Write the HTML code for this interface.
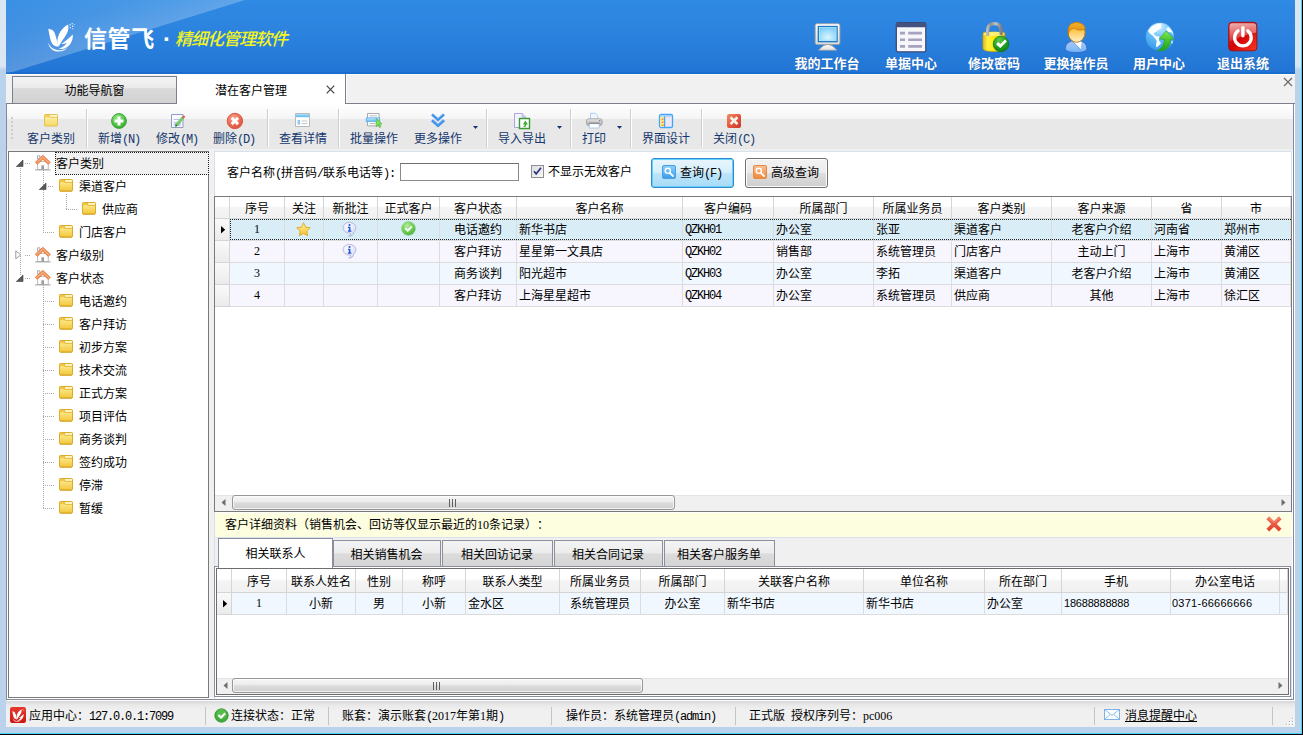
<!DOCTYPE html><html lang="zh-CN"><head><meta charset="utf-8"><title>信管飞 - 潜在客户管理</title><style>
html,body{margin:0;padding:0}
body{width:1303px;height:735px;overflow:hidden;position:relative;background:#bad2ec;
 font:12px/14px "Liberation Sans","Noto Sans CJK SC",sans-serif;color:#000;text-spacing-trim:space-all}
div,svg{position:absolute;box-sizing:border-box}
svg{overflow:visible}
.t{white-space:nowrap;line-height:14px;height:14px}
.n{font-size:11px}
.tb{color:#15376d}
.hd{color:#fff;font-weight:bold;font-size:13px;line-height:15px;white-space:nowrap;text-align:center;
 font-family:"Liberation Sans","Noto Sans CJK SC",sans-serif;text-shadow:0 0 1px rgba(20,60,130,.6)}
.m,.p{font-family:"Liberation Mono",monospace;font-size:12px;letter-spacing:-1.2px}
.s{font-family:"Liberation Serif",serif;font-size:12px}
</style></head><body>
<div style="left:0px;top:0px;width:1303px;height:70px;background:linear-gradient(#dbe6f3 0,#dbe6f3 66px,#bad2ec 70px)"></div>
<div style="left:1301px;top:0px;width:1px;height:734px;background:#45d0f8"></div>
<div style="left:0px;top:733px;width:1302px;height:1px;background:#45d0f8"></div>
<div style="left:1302px;top:0px;width:1px;height:735px;background:#000"></div>
<div style="left:0px;top:734px;width:1303px;height:1px;background:#000"></div>
<div style="left:6px;top:0px;width:1289px;height:74px;background:linear-gradient(#2f8ae3,#2b82de 50%,#2174d3);overflow:hidden"><svg style="left:0;top:0" width="1289" height="74" viewBox="6 0 1289 74"><defs><linearGradient id="hl" gradientUnits="userSpaceOnUse" x1="6" y1="0" x2="26.900" y2="67.600"><stop offset="0" stop-color="#fff" stop-opacity=".05"/><stop offset=".55" stop-color="#fff" stop-opacity=".12"/><stop offset="1" stop-color="#fff" stop-opacity=".24"/></linearGradient></defs><polygon points="6,0 245,0 6,74" fill="url(#hl)"/><rect x="6" y="72" width="1289" height="2" fill="#1768cc" opacity=".6"/></svg></div>
<svg style="left:46px;top:22px;" width="30" height="30" viewBox="0 0 30 30"><path d="M2.300 6.700C5 7 7.500 8.200 8.400 10.200c1.500 3.400 2.400 8.800 4.200 14.400-3-.2-5.400-1.200-6.600-3.200C4 18 3.400 12.500 2.300 6.700z" fill="#fff"/><path d="M12.600 24.600c-1.800-3.400-1.700-8 .4-12.400C15 8 18.300 4.600 22 2.600c.9 2.600.4 6.200-1.400 9.400-1.900 3.400-5 7.400-8 12.600z" fill="#fff"/><path d="M26.800 12.400C27.200 18 24.500 23.500 19.500 26 17 27.200 14.500 27.400 12.600 26.600 16.500 25.600 19.500 23.400 21 20.400 19.200 21.400 17.400 22 15.400 22 19 19.600 22.800 16 26.800 12.400z" fill="#fff"/><path d="M2.200 20.400c1.200 3.600 4.200 6.400 8.200 7.400 4.200 1 8.400 0 11.800-2.800-3 3.600-7.400 5.200-11.800 4.400-4.400-.8-7.600-4-8.200-9z" fill="#fff" opacity=".92"/><rect x="23.400" y="2.200" width="1.300" height="1.300" fill="#fff" opacity=".9"/><rect x="25.600" y="1" width="1.200" height="1.200" fill="#fff" opacity=".85"/><rect x="26" y="3.600" width="1.300" height="1.300" fill="#fff" opacity=".85"/><rect x="23.800" y="5" width="1.200" height="1.200" fill="#fff" opacity=".8"/><rect x="26.200" y="6.200" width="1.100" height="1.100" fill="#fff" opacity=".75"/><rect x="27.800" y="2.200" width="1" height="1" fill="#fff" opacity=".7"/></svg>
<div style="left:84px;top:24px;width:72px;height:30px;white-space:nowrap;color:#fff;font:bold 23px/30px 'Liberation Sans','Noto Sans CJK SC',sans-serif;letter-spacing:.6px">信管飞</div>
<div style="left:160px;top:24px;width:14px;height:30px;color:#fff;font:bold 24px/30px 'Liberation Sans','Noto Sans CJK SC',sans-serif;text-align:center">·</div>
<div style="left:175px;top:25px;height:30px;white-space:nowrap;color:#f4f41e;letter-spacing:-1px;font:italic 500 17px/30px 'Liberation Sans','Noto Sans CJK SC',sans-serif">精细化管理软件</div>
<svg style="left:811px;top:21px;" width="32" height="32" viewBox="0 0 32 32"><defs><linearGradient id="mo1" x1="0" y1="0" x2="0" y2="1"><stop offset="0" stop-color="#ffffff"/><stop offset="1" stop-color="#dcdcdc"/></linearGradient><radialGradient id="mo2" cx=".5" cy=".7" r=".75"><stop offset="0" stop-color="#d8f6ff"/><stop offset="1" stop-color="#6ec6f8"/></radialGradient></defs><path d="M7.500 29.300Q16.700 17.500 25.900 29.300z" fill="url(#mo1)" stroke="#9a9a9a" stroke-width=".7"/><rect x="4.200" y="2.700" width="24.700" height="20.800" rx="1.800" fill="url(#mo1)" stroke="#a2a2a2" stroke-width=".9"/><rect x="7.300" y="5.500" width="18.800" height="15.200" fill="url(#mo2)" stroke="#1f78c0" stroke-width="1.300"/><rect x="8.400" y="6.600" width="16.600" height="13" fill="none" stroke="#b4e4fc" stroke-width=".7"/></svg>
<div class="hd" style="left:787px;top:56px;width:80px;height:15px">我的工作台</div>
<svg style="left:895px;top:21px;" width="32" height="32" viewBox="0 0 32 32"><rect x="1.300" y="1.600" width="29.500" height="29.200" rx="1.600" fill="#f6f6fb" stroke="#3d4a78" stroke-width="1.300"/><path d="M1.700 3.200q0-1.200 1.200-1.200h26.300q1.200 0 1.200 1.200v3H1.700z" fill="#46527e"/><path d="M5 10.700h5v2.700H5zM13.200 10.700h13.800v2.700H13.200zM5 17.400h5v2.700H5zM13.200 17.400h13.800v2.700H13.200zM5 24.100h5v2.700H5zM13.200 24.100h13.800v2.700H13.200z" fill="#a5a3bf"/></svg>
<div class="hd" style="left:871px;top:56px;width:80px;height:15px">单据中心</div>
<svg style="left:978px;top:21px;" width="32" height="32" viewBox="0 0 32 32"><defs><linearGradient id="lk1" x1="0" y1="0" x2="1" y2="0"><stop offset="0" stop-color="#e8bc08"/><stop offset=".22" stop-color="#fff24a"/><stop offset=".45" stop-color="#ffea10"/><stop offset="1" stop-color="#e6b208"/></linearGradient><linearGradient id="lk2" x1="0" y1="0" x2="1" y2="0"><stop offset="0" stop-color="#b9b9b9"/><stop offset=".25" stop-color="#8c8c8c"/><stop offset=".6" stop-color="#c4c4c4"/><stop offset="1" stop-color="#7e7e7e"/></linearGradient><radialGradient id="lk3" cx=".4" cy=".25" r=".85"><stop offset="0" stop-color="#5ccc44"/><stop offset=".6" stop-color="#1f9a1e"/><stop offset="1" stop-color="#0c7a14"/></radialGradient></defs><path d="M5 12.800q0-1.600 1.600-1.600h18.600q1.600 0 1.600 1.600v14.400q0 3.200-10.900 3.200T5 27.200z" fill="url(#lk1)" stroke="#d6a406" stroke-width=".7"/><ellipse cx="15.900" cy="12.900" rx="10.600" ry="2.100" fill="#fff37a" opacity=".9"/><path d="M9.600 15V9.400q0-6.800 6.700-6.800t6.800 6.800V14" fill="none" stroke="url(#lk2)" stroke-width="3.200"/><circle cx="23" cy="23" r="7.800" fill="url(#lk3)" stroke="#0d7414" stroke-width=".7"/><path d="M18.100 23.400l2-2.300 2.300 1.900 4.700-4.400 1.700 1.900-6.500 6.500z" fill="#fff"/></svg>
<div class="hd" style="left:954px;top:56px;width:80px;height:15px">修改密码</div>
<svg style="left:1060px;top:21px;" width="32" height="32" viewBox="0 0 32 32"><defs><linearGradient id="us1" x1="0" y1="0" x2="0" y2="1"><stop offset="0" stop-color="#ffb020"/><stop offset=".35" stop-color="#ffc040"/><stop offset="1" stop-color="#fff4cc"/></linearGradient><linearGradient id="us2" x1="0" y1="0" x2="0" y2="1"><stop offset="0" stop-color="#a9c6f4"/><stop offset=".6" stop-color="#8cc0f8"/><stop offset="1" stop-color="#6fb2f4"/></linearGradient><linearGradient id="us3" x1="0" y1="0" x2="0" y2="1"><stop offset="0" stop-color="#f4b030"/><stop offset="1" stop-color="#dc8c04"/></linearGradient></defs><path d="M5.300 27.500q0-7.500 10.800-8.200 10.800.7 10.800 8.200 0 4-10.800 4T5.300 27.500z" fill="url(#us2)" stroke="#3a62c8" stroke-width=".8"/><path d="M12.600 20.500h9l-.9 7.900z" fill="#fff"/><path d="M12.600 20.500l8.100 7.900" stroke="#4a7ad0" stroke-width=".7"/><ellipse cx="16.600" cy="11.300" rx="8.500" ry="10" fill="url(#us1)" stroke="#c07408" stroke-width=".9"/><path d="M8.100 13.200Q7.300 5 11.500 2.600 16.500 .2 21.600 2.600 25.700 5 25.100 8q-3 1.800-7.600.8-3.400-2.600-6.400-.6-2 2.200-3 5z" fill="url(#us3)" stroke="#c07408" stroke-width=".6"/></svg>
<div class="hd" style="left:1036px;top:56px;width:80px;height:15px">更换操作员</div>
<svg style="left:1144px;top:21px;" width="32" height="32" viewBox="0 0 32 32"><defs><radialGradient id="gl1" cx=".5" cy=".15" r=".95"><stop offset="0" stop-color="#c8eeff"/><stop offset=".45" stop-color="#62bcf6"/><stop offset="1" stop-color="#2b8fe4"/></radialGradient><linearGradient id="gl2" x1="0" y1="0" x2="0" y2="1"><stop offset="0" stop-color="#86ea52"/><stop offset=".5" stop-color="#44c22c"/><stop offset="1" stop-color="#1f9c18"/></linearGradient></defs><circle cx="15.900" cy="15.900" r="14.100" fill="url(#gl1)"/><path d="M4 9.800L7.300 5.400 13.800 2.400l3.900.3-.6 4.400-4.300 3.200-3.300 2.200 2.200 2.200 3.800 1.100-.6 3.800 2.200 2.700-4.300 4.300-.9-2.100.9-4.400-1.700-2.700-2.200-2.700-3.200-2.200z" fill="#fff" opacity=".96"/><path d="M22 8.100l2.200-2.400 3.800 4.100 1.900 4.900-2.400-3.200-3.300-.8z" fill="#fff" opacity=".96"/><path d="M26.900 20.100l2.200.6-1.200 2.600z" fill="#fff" opacity=".85"/><path d="M22.300 10L29.900 17.900l-3.500.5q.1 8.100-5.900 10.600-3.500 1.300-7.200.8 6.200-2.800 7.300-11.400l-5.400-.5z" fill="url(#gl2)" stroke="#27a01c" stroke-width=".6" stroke-linejoin="round"/></svg>
<div class="hd" style="left:1119px;top:56px;width:80px;height:15px">用户中心</div>
<svg style="left:1227px;top:21px;" width="32" height="32" viewBox="0 0 32 32"><defs><linearGradient id="pw1" x1="0" y1="0" x2="1" y2="1"><stop offset="0" stop-color="#d83030"/><stop offset=".5" stop-color="#d40404"/><stop offset="1" stop-color="#f83a24"/></linearGradient><linearGradient id="pw2" x1="0" y1="0" x2="0" y2="1"><stop offset="0" stop-color="#fff" stop-opacity=".62"/><stop offset="1" stop-color="#fff" stop-opacity=".12"/></linearGradient></defs><rect x="1.700" y="1.300" width="28.200" height="28.500" rx="3.400" fill="url(#pw1)" stroke="#a00c0c" stroke-width=".9"/><path d="M2.600 5q0-2.800 2.800-2.800h21q2.800 0 2.800 2.800v6.500Q16 14 2.600 20.500z" fill="url(#pw2)"/><path d="M11 9.800a8.300 8.300 0 1 0 9.800 0" fill="none" stroke="#fff" stroke-width="3.300" stroke-linecap="round"/><path d="M15.900 6.600v8.200" stroke="#fff" stroke-width="3.400" stroke-linecap="round"/></svg>
<div class="hd" style="left:1203px;top:56px;width:80px;height:15px">退出系统</div>
<div style="left:6px;top:74px;width:1289px;height:30px;background:#f1f1f1;border-top:1px solid #fffdf6"></div>
<div style="left:6px;top:103px;width:1289px;height:1px;background:#7b7f8e"></div>
<div style="left:12px;top:76px;width:165px;height:28px;border:1px solid #7b7f8e;background:linear-gradient(#f3f3f3 0,#ebebeb 40%,#dadada 45%,#d2d2d2 100%)"></div>
<div class="t" style="left:12px;top:84px;width:165px;text-align:center;">功能导航窗</div>
<div style="left:177px;top:74px;width:169px;height:30px;background:#fff;border-right:1px solid #7b7f8e"></div>
<div style="left:346px;top:75px;width:1px;height:28px;background:#fbfbfb"></div>
<div class="t" style="left:215px;top:84px;">潜在客户管理</div>
<svg style="left:326px;top:85px;" width="9" height="9" viewBox="0 0 9 9"><path d="M.7.7l7.6 7.6M8.3.7L.7 8.3" stroke="#444" stroke-width="1.2" fill="none"/></svg>
<svg style="left:1283px;top:77px;" width="10" height="10" viewBox="0 0 10 10"><path d="M1 1l8 8M9 1L1 9" stroke="#6b6b6b" stroke-width="1.2" fill="none"/></svg>
<div style="left:6px;top:104px;width:1288px;height:596px;background:#f0f0f0;border-left:1px solid #868a98;border-right:1px solid #868a98;border-bottom:1px solid #868a98;box-shadow:inset 0 -1px 0 #fff,inset 1px 0 0 #fff,inset -1px 0 0 #fff"></div>
<div style="left:1294px;top:104px;width:1px;height:596px;background:#fff"></div>
<div style="left:7px;top:104px;width:1286px;height:47px;background:linear-gradient(#ffffff 0,#f5f5f5 15px,#e8e8e8 15px,#e8e8e8 45px,#f0f0f0 45px,#f0f0f0 47px)"></div>
<div style="left:11px;top:117px;width:2px;height:2px;background:#cdcdcd"></div>
<div style="left:11px;top:121px;width:2px;height:2px;background:#cdcdcd"></div>
<div style="left:11px;top:125px;width:2px;height:2px;background:#cdcdcd"></div>
<div style="left:11px;top:129px;width:2px;height:2px;background:#cdcdcd"></div>
<div style="left:11px;top:133px;width:2px;height:2px;background:#cdcdcd"></div>
<div style="left:11px;top:137px;width:2px;height:2px;background:#cdcdcd"></div>
<div class="t tb" style="left:27px;top:132px;">客户类别</div>
<svg style="left:43px;top:112px;" width="16" height="16" viewBox="0 0 16 16"><defs><linearGradient id="fo1" x1="0" y1="0" x2="0" y2="1"><stop offset="0" stop-color="#fdf3b4"/><stop offset="1" stop-color="#f6d864"/></linearGradient></defs><path d="M1.500 3.200q0-.7.7-.7h11.600q.7 0 .7.700v10.100q0 .7-.7.700H2.200q-.7 0-.7-.700z" fill="url(#fo1)" stroke="#e3c050" stroke-width="1"/><path d="M2 3h4.200l.8 2.200H2z" fill="#f3d25c"/><path d="M6.400 3.200h7.700v1.700H7z" fill="#fff8d2"/><path d="M6 3l.9 2.300h7.300" stroke="#e2bf50" stroke-width=".8" fill="none"/></svg>
<div class="t tb" style="left:98px;top:132px;">新增<span class="p">(N)</span></div>
<svg style="left:111px;top:112px;" width="16" height="16" viewBox="0 0 16 16"><defs><radialGradient id="ad1" cx=".4" cy=".3" r=".8"><stop offset="0" stop-color="#9de88c"/><stop offset=".6" stop-color="#4fc244"/><stop offset="1" stop-color="#2f9e2c"/></radialGradient></defs><circle cx="8" cy="9" r="7.4" fill="url(#ad1)" stroke="#3aa537" stroke-width="1"/><path d="M6.5 4.6h3v2.9h2.9v3H9.5v2.9h-3v-2.9H3.6v-3h2.9z" fill="#fff"/></svg>
<div class="t tb" style="left:156px;top:132px;">修改<span class="p">(M)</span></div>
<svg style="left:169px;top:112px;" width="16" height="16" viewBox="0 0 16 16"><path d="M2.500 2.500h11.500v13h-11.500z" fill="#fbfbff" stroke="#8c9cc6" stroke-width="1"/><path d="M4.500 7.500h6" stroke="#b4c0e6" stroke-width="1"/><path d="M4.600 9.600h7.400v4.200H4.600z" fill="#cdd5f2"/><path d="M6 11h4.600v2.800H6z" fill="#b9c4ec"/><path d="M6.900 12.300L13 4.900l1.700 1.400-6.100 7.400-2.200.900z" fill="#74d862" stroke="#4aa840" stroke-width=".6"/><path d="M13 4.900l1-1.200q.6-.6 1.300 0l.5.400q.6.600.100 1.200l-1.100 1.200z" fill="#ea5a4a"/><path d="M6.400 14.600l.5-2.300 1.700 1.400z" fill="#4a4a4a"/></svg>
<div class="t tb" style="left:213px;top:132px;">删除<span class="p">(D)</span></div>
<svg style="left:226px;top:112px;" width="16" height="16" viewBox="0 0 16 16"><defs><radialGradient id="de1" cx=".4" cy=".3" r=".8"><stop offset="0" stop-color="#f7a38c"/><stop offset=".6" stop-color="#e86850"/><stop offset="1" stop-color="#d24c38"/></radialGradient></defs><circle cx="8.900" cy="9" r="7.700" fill="url(#de1)" stroke="#dc5a44" stroke-width="1"/><path d="M4.700 6.900l2.100-2.100 2.100 2.100 2.100-2.100 2.100 2.100L11 9l2.100 2.100-2.100 2.100-2.100-2.100-2.100 2.100-2.100-2.100L6.800 9z" fill="#fff"/></svg>
<div class="t tb" style="left:279px;top:132px;">查看详情</div>
<svg style="left:295px;top:112px;" width="16" height="16" viewBox="0 0 16 16"><path d="M.5 1.5h14v13H.5z" fill="#fff" stroke="#b9b9b9" stroke-width="1"/><path d="M1 2h13v3.2H1z" fill="#6fc3f7"/><path d="M1 2h13v1.2H1z" fill="#a9dcfb"/><path d="M2.6 8h2.4v4.6H2.6z" fill="#8ec9f5"/><path d="M6.6 9h5.8M6.6 11.6h5.8" stroke="#c4c4c4" stroke-width="1"/></svg>
<div class="t tb" style="left:350px;top:132px;">批量操作</div>
<svg style="left:366px;top:112px;" width="16" height="16" viewBox="0 0 16 16"><path d="M1.5 1.5h11.6v12.4H1.5z" fill="#fff" stroke="#a9a9a9" stroke-width="1"/><path d="M3.4 3.8h7.8M3.4 11.6h6" stroke="#bdbdbd" stroke-width="1"/><path d="M.3 5.8h13.4v3.8H.3z" fill="#79c8f8" stroke="#4aa6ec" stroke-width=".7"/><path d="M.8 6.3h12.4v1.2H.8z" fill="#b7e2fc"/><path d="M10.2 6.4v8.2l2-1.7 1.3 2.6 1.4-.7-1.3-2.5 2.4-.3z" fill="#7ee05a" stroke="#52b53a" stroke-width=".7"/></svg>
<div class="t tb" style="left:414px;top:132px;">更多操作</div>
<svg style="left:430px;top:112px;" width="16" height="16" viewBox="0 0 16 16"><path d="M1 3.3L3 1.4l5 4.5 5-4.5 2 1.9L8 9.6z" fill="#3f92ec"/><path d="M1 9.2L3 7.3l5 4.5 5-4.5 2 1.9L8 15.5z" fill="#3f92ec"/><path d="M3 1.9l5 4.5 5-4.5" stroke="#8cc2f8" stroke-width=".8" fill="none"/><path d="M3 7.8l5 4.5 5-4.5" stroke="#8cc2f8" stroke-width=".8" fill="none"/></svg>
<div class="t tb" style="left:498px;top:132px;">导入导出</div>
<svg style="left:514px;top:112px;" width="16" height="16" viewBox="0 0 16 16"><path d="M.5 1.5h7.6l3.4 3.4v10.6H.5z" fill="#f4f4ff" stroke="#a8a6d8" stroke-width="1"/><path d="M8.1 1.5v3.4h3.4" fill="#dcdcf6" stroke="#a8a6d8" stroke-width=".8"/><path d="M5.5 6.5h10v10h-10z" fill="#fff" stroke="#3a9a35" stroke-width="1.4"/><path d="M8.4 14.8q2.2.2 2.2-2.4H8.9L11.4 8.4l2.6 4h-1.7q0 3.6-3.9 2.4z" fill="#44b03c"/></svg>
<div class="t tb" style="left:582px;top:132px;">打印</div>
<svg style="left:586px;top:112px;" width="16" height="16" viewBox="0 0 16 16"><path d="M4.5 1.3h5l2.2 2.2v4h-7.2z" fill="#eef5ff" stroke="#9fc4ee" stroke-width=".8"/><defs><linearGradient id="pr1" x1="0" y1="0" x2="0" y2="1"><stop offset="0" stop-color="#e9e9e9"/><stop offset="1" stop-color="#a9a9a9"/></linearGradient></defs><rect x=".5" y="6.8" width="15.6" height="6.6" rx="2" fill="url(#pr1)" stroke="#9a9a9a" stroke-width=".8"/><path d="M3.4 11.6h9.8v4.4H3.4z" fill="#fff" stroke="#9fc4ee" stroke-width=".8"/><path d="M3 11.2h10.6" stroke="#777" stroke-width="1"/><circle cx="13.8" cy="8.6" r=".6" fill="#555"/></svg>
<div class="t tb" style="left:642px;top:132px;">界面设计</div>
<svg style="left:658px;top:112px;" width="16" height="16" viewBox="0 0 16 16"><rect x="1.5" y="2.5" width="13" height="13" rx="1.6" fill="#ece8fb" stroke="#41a6f6" stroke-width="1.3"/><path d="M2.2 3.2h11.6v1.6H2.2z" fill="#9fd2fb"/><path d="M2.2 4.8h4.2v10H2.2z" fill="#fbe78c"/><path d="M6.6 4.4v10.8" stroke="#41a6f6" stroke-width="1.2"/><path d="M3.2 7.6l2.2-1.4v1.6zM3.2 10.6l2.2-1.4v1.6zM3.2 13.6l2.2-1.4v1.6z" fill="#f0523c"/></svg>
<div class="t tb" style="left:713px;top:132px;">关闭<span class="p">(C)</span></div>
<svg style="left:726px;top:112px;" width="16" height="16" viewBox="0 0 16 16"><defs><linearGradient id="cl1" x1="0" y1="0" x2="1" y2="1"><stop offset="0" stop-color="#f58b62"/><stop offset=".5" stop-color="#e5573d"/><stop offset="1" stop-color="#c83a2c"/></linearGradient></defs><rect x="1" y="2" width="14" height="14" rx="2" fill="url(#cl1)"/><path d="M3.6 6.2l1.9-1.9L8 6.8l2.5-2.5 1.9 1.9L9.9 8.7l2.5 2.5-1.9 1.9L8 10.6l-2.5 2.5-1.9-1.9 2.5-2.5z" fill="#f3f3ee"/></svg>
<div style="left:86px;top:109px;width:2px;height:38px;background:linear-gradient(90deg,#cfcfcf 0,#cfcfcf 50%,#fff 50%)"></div>
<div style="left:267px;top:109px;width:2px;height:38px;background:linear-gradient(90deg,#cfcfcf 0,#cfcfcf 50%,#fff 50%)"></div>
<div style="left:338px;top:109px;width:2px;height:38px;background:linear-gradient(90deg,#cfcfcf 0,#cfcfcf 50%,#fff 50%)"></div>
<div style="left:486px;top:109px;width:2px;height:38px;background:linear-gradient(90deg,#cfcfcf 0,#cfcfcf 50%,#fff 50%)"></div>
<div style="left:570px;top:109px;width:2px;height:38px;background:linear-gradient(90deg,#cfcfcf 0,#cfcfcf 50%,#fff 50%)"></div>
<div style="left:630px;top:109px;width:2px;height:38px;background:linear-gradient(90deg,#cfcfcf 0,#cfcfcf 50%,#fff 50%)"></div>
<div style="left:701px;top:109px;width:2px;height:38px;background:linear-gradient(90deg,#cfcfcf 0,#cfcfcf 50%,#fff 50%)"></div>
<svg style="left:473px;top:126px;" width="5" height="3" viewBox="0 0 5 3"><path d="M0 0h5L2.5 3z" fill="#15376d"/></svg>
<svg style="left:557px;top:126px;" width="5" height="3" viewBox="0 0 5 3"><path d="M0 0h5L2.5 3z" fill="#15376d"/></svg>
<svg style="left:617px;top:126px;" width="5" height="3" viewBox="0 0 5 3"><path d="M0 0h5L2.5 3z" fill="#15376d"/></svg>
<div style="left:8px;top:151px;width:201px;height:547px;background:#fff;border:1px solid #7a7a7a"></div>
<div style="left:20px;top:168px;width:1px;height:107px;background:repeating-linear-gradient(180deg,#a8a8a8 0,#a8a8a8 1px,transparent 1px,transparent 2px)"></div>
<div style="left:43px;top:170px;width:1px;height:63px;background:repeating-linear-gradient(180deg,#a8a8a8 0,#a8a8a8 1px,transparent 1px,transparent 2px)"></div>
<div style="left:66px;top:194px;width:1px;height:16px;background:repeating-linear-gradient(180deg,#a8a8a8 0,#a8a8a8 1px,transparent 1px,transparent 2px)"></div>
<div style="left:43px;top:285px;width:1px;height:224px;background:repeating-linear-gradient(180deg,#a8a8a8 0,#a8a8a8 1px,transparent 1px,transparent 2px)"></div>
<div style="left:55px;top:152px;width:154px;height:23px;background:#f0f0f0;border:1px dotted #222"></div>
<svg style="left:16px;top:160px;" width="8" height="7" viewBox="0 0 8 7"><path d="M7 0v6.500H.3z" fill="#595959" stroke="#404040" stroke-width=".6"/></svg>
<div style="left:25px;top:163px;width:6px;height:1px;background:repeating-linear-gradient(90deg,#a8a8a8 0,#a8a8a8 1px,transparent 1px,transparent 2px)"></div>
<svg style="left:35px;top:155px;" width="16" height="16" viewBox="0 0 16 16"><path d="M2.500 .800h2.400v3.400H2.500z" fill="#fafafa" stroke="#9a9a9a" stroke-width=".8"/><path d="M2.500 6.500h10.800v8H2.500z" fill="#fdfdfd" stroke="#b8b8b8" stroke-width=".9"/><path d="M6.400 10.300h2.600v4.200H6.400z" fill="#9c9c9c"/><path d="M0 14.900h15.600" stroke="#a2a2a2" stroke-width="1"/><path d="M.300 7.300L7.800.300l7.500 7-2 2.100-5.500-5.200-5.500 5.200z" fill="#f3935a" stroke="#de6c2c" stroke-width=".7" stroke-linejoin="round"/><path d="M1.700 7.800l6.100-5.800 6.100 5.800" stroke="#fde0c8" stroke-width="1" fill="none" stroke-dasharray=".8 .8"/></svg>
<div class="t" style="left:56px;top:157px;">客户类别</div>
<svg style="left:39px;top:183px;" width="8" height="7" viewBox="0 0 8 7"><path d="M7 0v6.500H.3z" fill="#595959" stroke="#404040" stroke-width=".6"/></svg>
<div style="left:48px;top:186px;width:6px;height:1px;background:repeating-linear-gradient(90deg,#a8a8a8 0,#a8a8a8 1px,transparent 1px,transparent 2px)"></div>
<svg style="left:58px;top:179px;" width="16" height="14" viewBox="0 0 16 14"><defs><linearGradient id="tf1" x1="0" y1="0" x2="0" y2="1"><stop offset="0" stop-color="#fdf2a6"/><stop offset=".25" stop-color="#fbe684"/><stop offset="1" stop-color="#f2c73a"/></linearGradient></defs><path d="M1.500 1.300q0-.8.800-.8h11.400q.8 0 .8.800v9.900q0 .8-.8.800H2.300q-.8 0-.8-.8z" fill="url(#tf1)" stroke="#dcab2c" stroke-width="1"/><path d="M2 1h4.400l.8 2.300H2z" fill="#f0c846"/><path d="M6.600 1.200h7.400v1.800H7.200z" fill="#fff7c4"/><path d="M6.200 1l.9 2.400h7" stroke="#deae30" stroke-width=".8" fill="none"/><path d="M2 12.300h12" stroke="#cf9e22" stroke-width=".8"/></svg>
<div class="t" style="left:79px;top:180px;">渠道客户</div>
<div style="left:66px;top:209px;width:11px;height:1px;background:repeating-linear-gradient(90deg,#a8a8a8 0,#a8a8a8 1px,transparent 1px,transparent 2px)"></div>
<svg style="left:81px;top:202px;" width="16" height="14" viewBox="0 0 16 14"><defs><linearGradient id="tf2" x1="0" y1="0" x2="0" y2="1"><stop offset="0" stop-color="#fdf2a6"/><stop offset=".25" stop-color="#fbe684"/><stop offset="1" stop-color="#f2c73a"/></linearGradient></defs><path d="M1.500 1.300q0-.8.800-.8h11.400q.8 0 .8.800v9.900q0 .8-.8.800H2.300q-.8 0-.8-.8z" fill="url(#tf2)" stroke="#dcab2c" stroke-width="1"/><path d="M2 1h4.400l.8 2.300H2z" fill="#f0c846"/><path d="M6.600 1.200h7.400v1.800H7.200z" fill="#fff7c4"/><path d="M6.200 1l.9 2.400h7" stroke="#deae30" stroke-width=".8" fill="none"/><path d="M2 12.300h12" stroke="#cf9e22" stroke-width=".8"/></svg>
<div class="t" style="left:102px;top:203px;">供应商</div>
<div style="left:43px;top:232px;width:11px;height:1px;background:repeating-linear-gradient(90deg,#a8a8a8 0,#a8a8a8 1px,transparent 1px,transparent 2px)"></div>
<svg style="left:58px;top:225px;" width="16" height="14" viewBox="0 0 16 14"><defs><linearGradient id="tf3" x1="0" y1="0" x2="0" y2="1"><stop offset="0" stop-color="#fdf2a6"/><stop offset=".25" stop-color="#fbe684"/><stop offset="1" stop-color="#f2c73a"/></linearGradient></defs><path d="M1.500 1.300q0-.8.800-.8h11.400q.8 0 .8.800v9.900q0 .8-.8.800H2.300q-.8 0-.8-.8z" fill="url(#tf3)" stroke="#dcab2c" stroke-width="1"/><path d="M2 1h4.400l.8 2.300H2z" fill="#f0c846"/><path d="M6.600 1.200h7.400v1.800H7.200z" fill="#fff7c4"/><path d="M6.200 1l.9 2.400h7" stroke="#deae30" stroke-width=".8" fill="none"/><path d="M2 12.300h12" stroke="#cf9e22" stroke-width=".8"/></svg>
<div class="t" style="left:79px;top:226px;">门店客户</div>
<svg style="left:15px;top:250px;" width="7" height="10" viewBox="0 0 7 10"><path d="M.8.800v8L5.800 4.800z" fill="#fff" stroke="#9a9a9a" stroke-width="1"/></svg>
<div style="left:25px;top:255px;width:6px;height:1px;background:repeating-linear-gradient(90deg,#a8a8a8 0,#a8a8a8 1px,transparent 1px,transparent 2px)"></div>
<svg style="left:35px;top:247px;" width="16" height="16" viewBox="0 0 16 16"><path d="M2.500 .800h2.400v3.400H2.500z" fill="#fafafa" stroke="#9a9a9a" stroke-width=".8"/><path d="M2.500 6.500h10.800v8H2.500z" fill="#fdfdfd" stroke="#b8b8b8" stroke-width=".9"/><path d="M6.400 10.300h2.600v4.200H6.400z" fill="#9c9c9c"/><path d="M0 14.900h15.600" stroke="#a2a2a2" stroke-width="1"/><path d="M.300 7.300L7.800.300l7.500 7-2 2.100-5.500-5.200-5.500 5.200z" fill="#f3935a" stroke="#de6c2c" stroke-width=".7" stroke-linejoin="round"/><path d="M1.700 7.800l6.100-5.800 6.100 5.800" stroke="#fde0c8" stroke-width="1" fill="none" stroke-dasharray=".8 .8"/></svg>
<div class="t" style="left:56px;top:249px;">客户级别</div>
<svg style="left:16px;top:275px;" width="8" height="7" viewBox="0 0 8 7"><path d="M7 0v6.500H.3z" fill="#595959" stroke="#404040" stroke-width=".6"/></svg>
<div style="left:25px;top:278px;width:6px;height:1px;background:repeating-linear-gradient(90deg,#a8a8a8 0,#a8a8a8 1px,transparent 1px,transparent 2px)"></div>
<svg style="left:35px;top:270px;" width="16" height="16" viewBox="0 0 16 16"><path d="M2.500 .800h2.400v3.400H2.500z" fill="#fafafa" stroke="#9a9a9a" stroke-width=".8"/><path d="M2.500 6.500h10.800v8H2.500z" fill="#fdfdfd" stroke="#b8b8b8" stroke-width=".9"/><path d="M6.400 10.300h2.600v4.200H6.400z" fill="#9c9c9c"/><path d="M0 14.900h15.600" stroke="#a2a2a2" stroke-width="1"/><path d="M.300 7.300L7.800.300l7.500 7-2 2.100-5.500-5.200-5.500 5.200z" fill="#f3935a" stroke="#de6c2c" stroke-width=".7" stroke-linejoin="round"/><path d="M1.700 7.800l6.100-5.800 6.100 5.800" stroke="#fde0c8" stroke-width="1" fill="none" stroke-dasharray=".8 .8"/></svg>
<div class="t" style="left:56px;top:272px;">客户状态</div>
<div style="left:43px;top:301px;width:11px;height:1px;background:repeating-linear-gradient(90deg,#a8a8a8 0,#a8a8a8 1px,transparent 1px,transparent 2px)"></div>
<svg style="left:58px;top:294px;" width="16" height="14" viewBox="0 0 16 14"><defs><linearGradient id="tf6" x1="0" y1="0" x2="0" y2="1"><stop offset="0" stop-color="#fdf2a6"/><stop offset=".25" stop-color="#fbe684"/><stop offset="1" stop-color="#f2c73a"/></linearGradient></defs><path d="M1.500 1.300q0-.8.800-.8h11.400q.8 0 .8.800v9.900q0 .8-.8.800H2.300q-.8 0-.8-.8z" fill="url(#tf6)" stroke="#dcab2c" stroke-width="1"/><path d="M2 1h4.400l.8 2.300H2z" fill="#f0c846"/><path d="M6.600 1.200h7.400v1.800H7.200z" fill="#fff7c4"/><path d="M6.200 1l.9 2.400h7" stroke="#deae30" stroke-width=".8" fill="none"/><path d="M2 12.300h12" stroke="#cf9e22" stroke-width=".8"/></svg>
<div class="t" style="left:79px;top:295px;">电话邀约</div>
<div style="left:43px;top:324px;width:11px;height:1px;background:repeating-linear-gradient(90deg,#a8a8a8 0,#a8a8a8 1px,transparent 1px,transparent 2px)"></div>
<svg style="left:58px;top:317px;" width="16" height="14" viewBox="0 0 16 14"><defs><linearGradient id="tf7" x1="0" y1="0" x2="0" y2="1"><stop offset="0" stop-color="#fdf2a6"/><stop offset=".25" stop-color="#fbe684"/><stop offset="1" stop-color="#f2c73a"/></linearGradient></defs><path d="M1.500 1.300q0-.8.800-.8h11.400q.8 0 .8.800v9.900q0 .8-.8.800H2.300q-.8 0-.8-.8z" fill="url(#tf7)" stroke="#dcab2c" stroke-width="1"/><path d="M2 1h4.400l.8 2.300H2z" fill="#f0c846"/><path d="M6.600 1.200h7.400v1.800H7.200z" fill="#fff7c4"/><path d="M6.200 1l.9 2.400h7" stroke="#deae30" stroke-width=".8" fill="none"/><path d="M2 12.300h12" stroke="#cf9e22" stroke-width=".8"/></svg>
<div class="t" style="left:79px;top:318px;">客户拜访</div>
<div style="left:43px;top:347px;width:11px;height:1px;background:repeating-linear-gradient(90deg,#a8a8a8 0,#a8a8a8 1px,transparent 1px,transparent 2px)"></div>
<svg style="left:58px;top:340px;" width="16" height="14" viewBox="0 0 16 14"><defs><linearGradient id="tf8" x1="0" y1="0" x2="0" y2="1"><stop offset="0" stop-color="#fdf2a6"/><stop offset=".25" stop-color="#fbe684"/><stop offset="1" stop-color="#f2c73a"/></linearGradient></defs><path d="M1.500 1.300q0-.8.800-.8h11.400q.8 0 .8.800v9.900q0 .8-.8.800H2.300q-.8 0-.8-.8z" fill="url(#tf8)" stroke="#dcab2c" stroke-width="1"/><path d="M2 1h4.400l.8 2.300H2z" fill="#f0c846"/><path d="M6.600 1.200h7.400v1.800H7.200z" fill="#fff7c4"/><path d="M6.200 1l.9 2.400h7" stroke="#deae30" stroke-width=".8" fill="none"/><path d="M2 12.300h12" stroke="#cf9e22" stroke-width=".8"/></svg>
<div class="t" style="left:79px;top:341px;">初步方案</div>
<div style="left:43px;top:370px;width:11px;height:1px;background:repeating-linear-gradient(90deg,#a8a8a8 0,#a8a8a8 1px,transparent 1px,transparent 2px)"></div>
<svg style="left:58px;top:363px;" width="16" height="14" viewBox="0 0 16 14"><defs><linearGradient id="tf9" x1="0" y1="0" x2="0" y2="1"><stop offset="0" stop-color="#fdf2a6"/><stop offset=".25" stop-color="#fbe684"/><stop offset="1" stop-color="#f2c73a"/></linearGradient></defs><path d="M1.500 1.300q0-.8.800-.8h11.400q.8 0 .8.800v9.900q0 .8-.8.800H2.300q-.8 0-.8-.8z" fill="url(#tf9)" stroke="#dcab2c" stroke-width="1"/><path d="M2 1h4.400l.8 2.300H2z" fill="#f0c846"/><path d="M6.600 1.200h7.400v1.800H7.200z" fill="#fff7c4"/><path d="M6.200 1l.9 2.400h7" stroke="#deae30" stroke-width=".8" fill="none"/><path d="M2 12.300h12" stroke="#cf9e22" stroke-width=".8"/></svg>
<div class="t" style="left:79px;top:364px;">技术交流</div>
<div style="left:43px;top:393px;width:11px;height:1px;background:repeating-linear-gradient(90deg,#a8a8a8 0,#a8a8a8 1px,transparent 1px,transparent 2px)"></div>
<svg style="left:58px;top:386px;" width="16" height="14" viewBox="0 0 16 14"><defs><linearGradient id="tf10" x1="0" y1="0" x2="0" y2="1"><stop offset="0" stop-color="#fdf2a6"/><stop offset=".25" stop-color="#fbe684"/><stop offset="1" stop-color="#f2c73a"/></linearGradient></defs><path d="M1.500 1.300q0-.8.800-.8h11.400q.8 0 .8.800v9.900q0 .8-.8.800H2.300q-.8 0-.8-.8z" fill="url(#tf10)" stroke="#dcab2c" stroke-width="1"/><path d="M2 1h4.400l.8 2.300H2z" fill="#f0c846"/><path d="M6.600 1.200h7.400v1.800H7.200z" fill="#fff7c4"/><path d="M6.200 1l.9 2.400h7" stroke="#deae30" stroke-width=".8" fill="none"/><path d="M2 12.300h12" stroke="#cf9e22" stroke-width=".8"/></svg>
<div class="t" style="left:79px;top:387px;">正式方案</div>
<div style="left:43px;top:416px;width:11px;height:1px;background:repeating-linear-gradient(90deg,#a8a8a8 0,#a8a8a8 1px,transparent 1px,transparent 2px)"></div>
<svg style="left:58px;top:409px;" width="16" height="14" viewBox="0 0 16 14"><defs><linearGradient id="tf11" x1="0" y1="0" x2="0" y2="1"><stop offset="0" stop-color="#fdf2a6"/><stop offset=".25" stop-color="#fbe684"/><stop offset="1" stop-color="#f2c73a"/></linearGradient></defs><path d="M1.500 1.300q0-.8.800-.8h11.400q.8 0 .8.800v9.900q0 .8-.8.800H2.300q-.8 0-.8-.8z" fill="url(#tf11)" stroke="#dcab2c" stroke-width="1"/><path d="M2 1h4.400l.8 2.300H2z" fill="#f0c846"/><path d="M6.600 1.200h7.400v1.800H7.200z" fill="#fff7c4"/><path d="M6.200 1l.9 2.400h7" stroke="#deae30" stroke-width=".8" fill="none"/><path d="M2 12.300h12" stroke="#cf9e22" stroke-width=".8"/></svg>
<div class="t" style="left:79px;top:410px;">项目评估</div>
<div style="left:43px;top:439px;width:11px;height:1px;background:repeating-linear-gradient(90deg,#a8a8a8 0,#a8a8a8 1px,transparent 1px,transparent 2px)"></div>
<svg style="left:58px;top:432px;" width="16" height="14" viewBox="0 0 16 14"><defs><linearGradient id="tf12" x1="0" y1="0" x2="0" y2="1"><stop offset="0" stop-color="#fdf2a6"/><stop offset=".25" stop-color="#fbe684"/><stop offset="1" stop-color="#f2c73a"/></linearGradient></defs><path d="M1.500 1.300q0-.8.800-.8h11.400q.8 0 .8.800v9.900q0 .8-.8.800H2.300q-.8 0-.8-.8z" fill="url(#tf12)" stroke="#dcab2c" stroke-width="1"/><path d="M2 1h4.400l.8 2.300H2z" fill="#f0c846"/><path d="M6.600 1.200h7.400v1.800H7.200z" fill="#fff7c4"/><path d="M6.200 1l.9 2.400h7" stroke="#deae30" stroke-width=".8" fill="none"/><path d="M2 12.300h12" stroke="#cf9e22" stroke-width=".8"/></svg>
<div class="t" style="left:79px;top:433px;">商务谈判</div>
<div style="left:43px;top:462px;width:11px;height:1px;background:repeating-linear-gradient(90deg,#a8a8a8 0,#a8a8a8 1px,transparent 1px,transparent 2px)"></div>
<svg style="left:58px;top:455px;" width="16" height="14" viewBox="0 0 16 14"><defs><linearGradient id="tf13" x1="0" y1="0" x2="0" y2="1"><stop offset="0" stop-color="#fdf2a6"/><stop offset=".25" stop-color="#fbe684"/><stop offset="1" stop-color="#f2c73a"/></linearGradient></defs><path d="M1.500 1.300q0-.8.800-.8h11.400q.8 0 .8.800v9.900q0 .8-.8.800H2.300q-.8 0-.8-.8z" fill="url(#tf13)" stroke="#dcab2c" stroke-width="1"/><path d="M2 1h4.400l.8 2.300H2z" fill="#f0c846"/><path d="M6.600 1.200h7.400v1.800H7.200z" fill="#fff7c4"/><path d="M6.200 1l.9 2.400h7" stroke="#deae30" stroke-width=".8" fill="none"/><path d="M2 12.300h12" stroke="#cf9e22" stroke-width=".8"/></svg>
<div class="t" style="left:79px;top:456px;">签约成功</div>
<div style="left:43px;top:485px;width:11px;height:1px;background:repeating-linear-gradient(90deg,#a8a8a8 0,#a8a8a8 1px,transparent 1px,transparent 2px)"></div>
<svg style="left:58px;top:478px;" width="16" height="14" viewBox="0 0 16 14"><defs><linearGradient id="tf14" x1="0" y1="0" x2="0" y2="1"><stop offset="0" stop-color="#fdf2a6"/><stop offset=".25" stop-color="#fbe684"/><stop offset="1" stop-color="#f2c73a"/></linearGradient></defs><path d="M1.500 1.300q0-.8.800-.8h11.400q.8 0 .8.800v9.900q0 .8-.8.800H2.300q-.8 0-.8-.8z" fill="url(#tf14)" stroke="#dcab2c" stroke-width="1"/><path d="M2 1h4.400l.8 2.300H2z" fill="#f0c846"/><path d="M6.600 1.200h7.400v1.800H7.200z" fill="#fff7c4"/><path d="M6.200 1l.9 2.400h7" stroke="#deae30" stroke-width=".8" fill="none"/><path d="M2 12.300h12" stroke="#cf9e22" stroke-width=".8"/></svg>
<div class="t" style="left:79px;top:479px;">停滞</div>
<div style="left:43px;top:508px;width:11px;height:1px;background:repeating-linear-gradient(90deg,#a8a8a8 0,#a8a8a8 1px,transparent 1px,transparent 2px)"></div>
<svg style="left:58px;top:501px;" width="16" height="14" viewBox="0 0 16 14"><defs><linearGradient id="tf15" x1="0" y1="0" x2="0" y2="1"><stop offset="0" stop-color="#fdf2a6"/><stop offset=".25" stop-color="#fbe684"/><stop offset="1" stop-color="#f2c73a"/></linearGradient></defs><path d="M1.500 1.300q0-.8.800-.8h11.400q.8 0 .8.800v9.900q0 .8-.8.800H2.300q-.8 0-.8-.8z" fill="url(#tf15)" stroke="#dcab2c" stroke-width="1"/><path d="M2 1h4.400l.8 2.300H2z" fill="#f0c846"/><path d="M6.600 1.200h7.400v1.800H7.200z" fill="#fff7c4"/><path d="M6.200 1l.9 2.400h7" stroke="#deae30" stroke-width=".8" fill="none"/><path d="M2 12.300h12" stroke="#cf9e22" stroke-width=".8"/></svg>
<div class="t" style="left:79px;top:502px;">暂缓</div>
<div style="left:214px;top:151px;width:1078px;height:548px;background:#fff;border:1px solid #d7e1ec;border-bottom:none"></div>
<div style="left:215px;top:152px;width:1076px;height:44px;background:#fff"></div>
<div class="t" style="left:227px;top:166px;">客户名称<span class="p">(</span>拼音码<span class="p">/</span>联系电话等<span class="p">):</span></div>
<div style="left:400px;top:163px;width:119px;height:18px;background:#fff;border:1px solid #8a8a8a;border-top-color:#6e6e6e"></div>
<div style="left:531px;top:165px;width:13px;height:13px;background:linear-gradient(135deg,#dcdfe4,#f6f6f6);border:1px solid #8e8f8f"><svg style="left:1px;top:1px" width="9" height="9" viewBox="0 0 9 9"><path d="M1 4.200l2.200 2.600L8 .8" stroke="#31347c" stroke-width="1.700" fill="none"/></svg></div>
<div class="t" style="left:548px;top:165px;">不显示无效客户</div>
<div style="left:651px;top:158px;width:83px;height:30px;border:1px solid #3689cf;border-radius:3px;background:linear-gradient(#e8f5fd 0,#d6eefb 48%,#bbe4fb 52%,#a9dbf6 100%);box-shadow:inset 0 0 0 1px #5cd3fa"></div>
<svg style="left:662px;top:165px;" width="14" height="14" viewBox="0 0 14 14"><defs><linearGradient id="mgb" x1="0" y1="0" x2="0" y2="1"><stop offset="0" stop-color="#8ad2fb"/><stop offset="1" stop-color="#3a9be9"/></linearGradient></defs><rect x=".5" y=".5" width="13" height="13" rx="1.5" fill="url(#mgb)" stroke="#4c9fe0" stroke-width="1"/><circle cx="5.800" cy="5.800" r="2.600" fill="none" stroke="#fff" stroke-width="1.400"/><path d="M7.800 7.800l3.200 3.200" stroke="#fff" stroke-width="1.800" stroke-linecap="round"/></svg>
<div class="t" style="left:680px;top:166px;">查询<span class="p">(F)</span></div>
<div style="left:745px;top:158px;width:83px;height:30px;border:1px solid #707070;border-radius:3px;background:linear-gradient(#f2f2f2 0,#ebebeb 48%,#dddddd 52%,#cfcfcf 100%);box-shadow:inset 0 0 0 1px #fcfcfc"></div>
<svg style="left:753px;top:165px;" width="14" height="14" viewBox="0 0 14 14"><defs><linearGradient id="mgo" x1="0" y1="0" x2="0" y2="1"><stop offset="0" stop-color="#fcc091"/><stop offset="1" stop-color="#f0873a"/></linearGradient></defs><rect x=".5" y=".5" width="13" height="13" rx="1.5" fill="url(#mgo)" stroke="#e58a45" stroke-width="1"/><circle cx="5.800" cy="5.800" r="2.600" fill="none" stroke="#fff" stroke-width="1.400"/><path d="M7.800 7.800l3.200 3.200" stroke="#fff" stroke-width="1.800" stroke-linecap="round"/></svg>
<div class="t" style="left:771px;top:166px;">高级查询</div>
<div style="left:214px;top:196px;width:1078px;height:316px;background:#fff;border:1px solid #7a7a7a"></div>
<div style="left:215px;top:197px;width:15px;height:22px;background:linear-gradient(#ffffff 0,#ffffff 42%,#f4f4f4 52%,#f1f1f1 100%);border-right:1px solid #d5d5d5;border-bottom:1px solid #d5d5d5"></div>
<div style="left:230px;top:197px;width:55px;height:22px;background:linear-gradient(#ffffff 0,#ffffff 42%,#f4f4f4 52%,#f1f1f1 100%);border-right:1px solid #d5d5d5;border-bottom:1px solid #d5d5d5"></div>
<div class="t" style="left:230px;top:202px;width:54px;text-align:center;">序号</div>
<div style="left:285px;top:197px;width:39px;height:22px;background:linear-gradient(#ffffff 0,#ffffff 42%,#f4f4f4 52%,#f1f1f1 100%);border-right:1px solid #d5d5d5;border-bottom:1px solid #d5d5d5"></div>
<div class="t" style="left:285px;top:202px;width:38px;text-align:center;">关注</div>
<div style="left:324px;top:197px;width:54px;height:22px;background:linear-gradient(#ffffff 0,#ffffff 42%,#f4f4f4 52%,#f1f1f1 100%);border-right:1px solid #d5d5d5;border-bottom:1px solid #d5d5d5"></div>
<div class="t" style="left:324px;top:202px;width:53px;text-align:center;">新批注</div>
<div style="left:378px;top:197px;width:62px;height:22px;background:linear-gradient(#ffffff 0,#ffffff 42%,#f4f4f4 52%,#f1f1f1 100%);border-right:1px solid #d5d5d5;border-bottom:1px solid #d5d5d5"></div>
<div class="t" style="left:378px;top:202px;width:61px;text-align:center;">正式客户</div>
<div style="left:440px;top:197px;width:77px;height:22px;background:linear-gradient(#ffffff 0,#ffffff 42%,#f4f4f4 52%,#f1f1f1 100%);border-right:1px solid #d5d5d5;border-bottom:1px solid #d5d5d5"></div>
<div class="t" style="left:440px;top:202px;width:76px;text-align:center;">客户状态</div>
<div style="left:517px;top:197px;width:166px;height:22px;background:linear-gradient(#ffffff 0,#ffffff 42%,#f4f4f4 52%,#f1f1f1 100%);border-right:1px solid #d5d5d5;border-bottom:1px solid #d5d5d5"></div>
<div class="t" style="left:517px;top:202px;width:165px;text-align:center;">客户名称</div>
<div style="left:683px;top:197px;width:91px;height:22px;background:linear-gradient(#ffffff 0,#ffffff 42%,#f4f4f4 52%,#f1f1f1 100%);border-right:1px solid #d5d5d5;border-bottom:1px solid #d5d5d5"></div>
<div class="t" style="left:683px;top:202px;width:90px;text-align:center;">客户编码</div>
<div style="left:774px;top:197px;width:100px;height:22px;background:linear-gradient(#ffffff 0,#ffffff 42%,#f4f4f4 52%,#f1f1f1 100%);border-right:1px solid #d5d5d5;border-bottom:1px solid #d5d5d5"></div>
<div class="t" style="left:774px;top:202px;width:99px;text-align:center;">所属部门</div>
<div style="left:874px;top:197px;width:78px;height:22px;background:linear-gradient(#ffffff 0,#ffffff 42%,#f4f4f4 52%,#f1f1f1 100%);border-right:1px solid #d5d5d5;border-bottom:1px solid #d5d5d5"></div>
<div class="t" style="left:874px;top:202px;width:77px;text-align:center;">所属业务员</div>
<div style="left:952px;top:197px;width:100px;height:22px;background:linear-gradient(#ffffff 0,#ffffff 42%,#f4f4f4 52%,#f1f1f1 100%);border-right:1px solid #d5d5d5;border-bottom:1px solid #d5d5d5"></div>
<div class="t" style="left:952px;top:202px;width:99px;text-align:center;">客户类别</div>
<div style="left:1052px;top:197px;width:100px;height:22px;background:linear-gradient(#ffffff 0,#ffffff 42%,#f4f4f4 52%,#f1f1f1 100%);border-right:1px solid #d5d5d5;border-bottom:1px solid #d5d5d5"></div>
<div class="t" style="left:1052px;top:202px;width:99px;text-align:center;">客户来源</div>
<div style="left:1152px;top:197px;width:70px;height:22px;background:linear-gradient(#ffffff 0,#ffffff 42%,#f4f4f4 52%,#f1f1f1 100%);border-right:1px solid #d5d5d5;border-bottom:1px solid #d5d5d5"></div>
<div class="t" style="left:1152px;top:202px;width:69px;text-align:center;">省</div>
<div style="left:1222px;top:197px;width:69px;height:22px;background:linear-gradient(#ffffff 0,#ffffff 42%,#f4f4f4 52%,#f1f1f1 100%);border-right:1px solid #d5d5d5;border-bottom:1px solid #d5d5d5"></div>
<div class="t" style="left:1222px;top:202px;width:68px;text-align:center;">市</div>
<div style="left:215px;top:219px;width:15px;height:22px;background:linear-gradient(#fafafa,#ebebeb);border-right:1px solid #d5d5d5;border-bottom:1px solid #d5d5d5"></div>
<div style="left:230px;top:219px;width:55px;height:22px;background:#d9edf7;border-right:1px solid #dcdcdc;border-bottom:1px solid #dcdcdc"></div>
<div class="t n" style="left:230px;top:222px;width:54px;text-align:center;font-family:'Liberation Serif',serif;font-size:12px">1</div>
<div style="left:285px;top:219px;width:39px;height:22px;background:#d9edf7;border-right:1px solid #dcdcdc;border-bottom:1px solid #dcdcdc"></div>
<svg style="left:296px;top:222px;" width="15" height="15" viewBox="0 0 16 16"><defs><linearGradient id="st1" x1="0" y1="0" x2="0" y2="1"><stop offset="0" stop-color="#fff19a"/><stop offset="1" stop-color="#f9c22e"/></linearGradient></defs><path d="M8 .8l2.2 4.7 5 .6-3.7 3.5 1 5.1L8 12.2l-4.5 2.5 1-5.1L.8 6.100l5-.6z" fill="url(#st1)" stroke="#e0a21c" stroke-width=".9" stroke-linejoin="round"/></svg>
<div style="left:324px;top:219px;width:54px;height:22px;background:#d9edf7;border-right:1px solid #dcdcdc;border-bottom:1px solid #dcdcdc"></div>
<svg style="left:342px;top:221px;" width="15" height="16" viewBox="0 0 16 16"><defs><radialGradient id="in0" cx=".4" cy=".3" r=".8"><stop offset="0" stop-color="#ffffff"/><stop offset="1" stop-color="#d0d4f2"/></radialGradient></defs><path d="M8 1C4 1 1.200 3.500 1.200 6.600c0 3.100 2.800 5.500 6.400 5.600 1.400.1 2 .9 1.200 2.300-.3.500-.9.900-1.600 1.100 3 .2 5.400-1.700 5.200-4.400 1.500-1 2.400-2.700 2.400-4.600C14.800 3.500 12 1 8 1z" fill="url(#in0)" stroke="#a4a9d2" stroke-width=".8"/><circle cx="8" cy="3.700" r="1.150" fill="#1f55d8"/><path d="M6.300 5.700h2.700v4h1v1.100h-3.700v-1.100h1v-2.900h-1z" fill="#1f55d8"/></svg>
<div style="left:378px;top:219px;width:62px;height:22px;background:#d9edf7;border-right:1px solid #dcdcdc;border-bottom:1px solid #dcdcdc"></div>
<svg style="left:401px;top:221px;" width="15" height="15" viewBox="0 0 16 16"><defs><radialGradient id="ok1" cx=".4" cy=".3" r=".8"><stop offset="0" stop-color="#b4ee98"/><stop offset=".6" stop-color="#68c850"/><stop offset="1" stop-color="#46a838"/></radialGradient></defs><circle cx="8" cy="8" r="7.300" fill="url(#ok1)" stroke="#7ccc6c" stroke-width=".8"/><path d="M3.800 8.300l1.500-1.500 1.900 1.900 3.700-3.700 1.500 1.500-5.200 5.200z" fill="#fff"/></svg>
<div style="left:440px;top:219px;width:77px;height:22px;background:#d9edf7;border-right:1px solid #dcdcdc;border-bottom:1px solid #dcdcdc"></div>
<div class="t" style="left:440px;top:223px;width:76px;text-align:center;">电话邀约</div>
<div style="left:517px;top:219px;width:166px;height:22px;background:#d9edf7;border-right:1px solid #dcdcdc;border-bottom:1px solid #dcdcdc"></div>
<div class="t" style="left:519px;top:223px;">新华书店</div>
<div style="left:683px;top:219px;width:91px;height:22px;background:#d9edf7;border-right:1px solid #dcdcdc;border-bottom:1px solid #dcdcdc"></div>
<div class="t m" style="left:685px;top:223px;">QZKH01</div>
<div style="left:774px;top:219px;width:100px;height:22px;background:#d9edf7;border-right:1px solid #dcdcdc;border-bottom:1px solid #dcdcdc"></div>
<div class="t" style="left:776px;top:223px;">办公室</div>
<div style="left:874px;top:219px;width:78px;height:22px;background:#d9edf7;border-right:1px solid #dcdcdc;border-bottom:1px solid #dcdcdc"></div>
<div class="t" style="left:876px;top:223px;">张亚</div>
<div style="left:952px;top:219px;width:100px;height:22px;background:#d9edf7;border-right:1px solid #dcdcdc;border-bottom:1px solid #dcdcdc"></div>
<div class="t" style="left:954px;top:223px;">渠道客户</div>
<div style="left:1052px;top:219px;width:100px;height:22px;background:#d9edf7;border-right:1px solid #dcdcdc;border-bottom:1px solid #dcdcdc"></div>
<div class="t" style="left:1052px;top:223px;width:99px;text-align:center;">老客户介绍</div>
<div style="left:1152px;top:219px;width:70px;height:22px;background:#d9edf7;border-right:1px solid #dcdcdc;border-bottom:1px solid #dcdcdc"></div>
<div class="t" style="left:1154px;top:223px;">河南省</div>
<div style="left:1222px;top:219px;width:69px;height:22px;background:#d9edf7;border-right:1px solid #dcdcdc;border-bottom:1px solid #dcdcdc"></div>
<div class="t" style="left:1224px;top:223px;">郑州市</div>
<div style="left:215px;top:241px;width:15px;height:22px;background:linear-gradient(#fafafa,#ebebeb);border-right:1px solid #d5d5d5;border-bottom:1px solid #d5d5d5"></div>
<div style="left:230px;top:241px;width:55px;height:22px;background:#f7f5fd;border-right:1px solid #dcdcdc;border-bottom:1px solid #dcdcdc"></div>
<div class="t n" style="left:230px;top:244px;width:54px;text-align:center;font-family:'Liberation Serif',serif;font-size:12px">2</div>
<div style="left:285px;top:241px;width:39px;height:22px;background:#f7f5fd;border-right:1px solid #dcdcdc;border-bottom:1px solid #dcdcdc"></div>
<div style="left:324px;top:241px;width:54px;height:22px;background:#f7f5fd;border-right:1px solid #dcdcdc;border-bottom:1px solid #dcdcdc"></div>
<svg style="left:342px;top:243px;" width="15" height="16" viewBox="0 0 16 16"><defs><radialGradient id="in1" cx=".4" cy=".3" r=".8"><stop offset="0" stop-color="#ffffff"/><stop offset="1" stop-color="#d0d4f2"/></radialGradient></defs><path d="M8 1C4 1 1.200 3.500 1.200 6.600c0 3.100 2.800 5.500 6.400 5.600 1.400.1 2 .9 1.200 2.300-.3.500-.9.900-1.600 1.100 3 .2 5.400-1.700 5.200-4.400 1.500-1 2.400-2.700 2.400-4.600C14.800 3.500 12 1 8 1z" fill="url(#in1)" stroke="#a4a9d2" stroke-width=".8"/><circle cx="8" cy="3.700" r="1.150" fill="#1f55d8"/><path d="M6.300 5.700h2.700v4h1v1.100h-3.700v-1.100h1v-2.900h-1z" fill="#1f55d8"/></svg>
<div style="left:378px;top:241px;width:62px;height:22px;background:#f7f5fd;border-right:1px solid #dcdcdc;border-bottom:1px solid #dcdcdc"></div>
<div style="left:440px;top:241px;width:77px;height:22px;background:#f7f5fd;border-right:1px solid #dcdcdc;border-bottom:1px solid #dcdcdc"></div>
<div class="t" style="left:440px;top:245px;width:76px;text-align:center;">客户拜访</div>
<div style="left:517px;top:241px;width:166px;height:22px;background:#f7f5fd;border-right:1px solid #dcdcdc;border-bottom:1px solid #dcdcdc"></div>
<div class="t" style="left:519px;top:245px;">星星第一文具店</div>
<div style="left:683px;top:241px;width:91px;height:22px;background:#f7f5fd;border-right:1px solid #dcdcdc;border-bottom:1px solid #dcdcdc"></div>
<div class="t m" style="left:685px;top:245px;">QZKH02</div>
<div style="left:774px;top:241px;width:100px;height:22px;background:#f7f5fd;border-right:1px solid #dcdcdc;border-bottom:1px solid #dcdcdc"></div>
<div class="t" style="left:776px;top:245px;">销售部</div>
<div style="left:874px;top:241px;width:78px;height:22px;background:#f7f5fd;border-right:1px solid #dcdcdc;border-bottom:1px solid #dcdcdc"></div>
<div class="t" style="left:876px;top:245px;">系统管理员</div>
<div style="left:952px;top:241px;width:100px;height:22px;background:#f7f5fd;border-right:1px solid #dcdcdc;border-bottom:1px solid #dcdcdc"></div>
<div class="t" style="left:954px;top:245px;">门店客户</div>
<div style="left:1052px;top:241px;width:100px;height:22px;background:#f7f5fd;border-right:1px solid #dcdcdc;border-bottom:1px solid #dcdcdc"></div>
<div class="t" style="left:1052px;top:245px;width:99px;text-align:center;">主动上门</div>
<div style="left:1152px;top:241px;width:70px;height:22px;background:#f7f5fd;border-right:1px solid #dcdcdc;border-bottom:1px solid #dcdcdc"></div>
<div class="t" style="left:1154px;top:245px;">上海市</div>
<div style="left:1222px;top:241px;width:69px;height:22px;background:#f7f5fd;border-right:1px solid #dcdcdc;border-bottom:1px solid #dcdcdc"></div>
<div class="t" style="left:1224px;top:245px;">黄浦区</div>
<div style="left:215px;top:263px;width:15px;height:22px;background:linear-gradient(#fafafa,#ebebeb);border-right:1px solid #d5d5d5;border-bottom:1px solid #d5d5d5"></div>
<div style="left:230px;top:263px;width:55px;height:22px;background:#f0f7fe;border-right:1px solid #dcdcdc;border-bottom:1px solid #dcdcdc"></div>
<div class="t n" style="left:230px;top:266px;width:54px;text-align:center;font-family:'Liberation Serif',serif;font-size:12px">3</div>
<div style="left:285px;top:263px;width:39px;height:22px;background:#f0f7fe;border-right:1px solid #dcdcdc;border-bottom:1px solid #dcdcdc"></div>
<div style="left:324px;top:263px;width:54px;height:22px;background:#f0f7fe;border-right:1px solid #dcdcdc;border-bottom:1px solid #dcdcdc"></div>
<div style="left:378px;top:263px;width:62px;height:22px;background:#f0f7fe;border-right:1px solid #dcdcdc;border-bottom:1px solid #dcdcdc"></div>
<div style="left:440px;top:263px;width:77px;height:22px;background:#f0f7fe;border-right:1px solid #dcdcdc;border-bottom:1px solid #dcdcdc"></div>
<div class="t" style="left:440px;top:267px;width:76px;text-align:center;">商务谈判</div>
<div style="left:517px;top:263px;width:166px;height:22px;background:#f0f7fe;border-right:1px solid #dcdcdc;border-bottom:1px solid #dcdcdc"></div>
<div class="t" style="left:519px;top:267px;">阳光超市</div>
<div style="left:683px;top:263px;width:91px;height:22px;background:#f0f7fe;border-right:1px solid #dcdcdc;border-bottom:1px solid #dcdcdc"></div>
<div class="t m" style="left:685px;top:267px;">QZKH03</div>
<div style="left:774px;top:263px;width:100px;height:22px;background:#f0f7fe;border-right:1px solid #dcdcdc;border-bottom:1px solid #dcdcdc"></div>
<div class="t" style="left:776px;top:267px;">办公室</div>
<div style="left:874px;top:263px;width:78px;height:22px;background:#f0f7fe;border-right:1px solid #dcdcdc;border-bottom:1px solid #dcdcdc"></div>
<div class="t" style="left:876px;top:267px;">李拓</div>
<div style="left:952px;top:263px;width:100px;height:22px;background:#f0f7fe;border-right:1px solid #dcdcdc;border-bottom:1px solid #dcdcdc"></div>
<div class="t" style="left:954px;top:267px;">渠道客户</div>
<div style="left:1052px;top:263px;width:100px;height:22px;background:#f0f7fe;border-right:1px solid #dcdcdc;border-bottom:1px solid #dcdcdc"></div>
<div class="t" style="left:1052px;top:267px;width:99px;text-align:center;">老客户介绍</div>
<div style="left:1152px;top:263px;width:70px;height:22px;background:#f0f7fe;border-right:1px solid #dcdcdc;border-bottom:1px solid #dcdcdc"></div>
<div class="t" style="left:1154px;top:267px;">上海市</div>
<div style="left:1222px;top:263px;width:69px;height:22px;background:#f0f7fe;border-right:1px solid #dcdcdc;border-bottom:1px solid #dcdcdc"></div>
<div class="t" style="left:1224px;top:267px;">黄浦区</div>
<div style="left:215px;top:285px;width:15px;height:22px;background:linear-gradient(#fafafa,#ebebeb);border-right:1px solid #d5d5d5;border-bottom:1px solid #d5d5d5"></div>
<div style="left:230px;top:285px;width:55px;height:22px;background:#f7f5fd;border-right:1px solid #dcdcdc;border-bottom:1px solid #dcdcdc"></div>
<div class="t n" style="left:230px;top:288px;width:54px;text-align:center;font-family:'Liberation Serif',serif;font-size:12px">4</div>
<div style="left:285px;top:285px;width:39px;height:22px;background:#f7f5fd;border-right:1px solid #dcdcdc;border-bottom:1px solid #dcdcdc"></div>
<div style="left:324px;top:285px;width:54px;height:22px;background:#f7f5fd;border-right:1px solid #dcdcdc;border-bottom:1px solid #dcdcdc"></div>
<div style="left:378px;top:285px;width:62px;height:22px;background:#f7f5fd;border-right:1px solid #dcdcdc;border-bottom:1px solid #dcdcdc"></div>
<div style="left:440px;top:285px;width:77px;height:22px;background:#f7f5fd;border-right:1px solid #dcdcdc;border-bottom:1px solid #dcdcdc"></div>
<div class="t" style="left:440px;top:289px;width:76px;text-align:center;">客户拜访</div>
<div style="left:517px;top:285px;width:166px;height:22px;background:#f7f5fd;border-right:1px solid #dcdcdc;border-bottom:1px solid #dcdcdc"></div>
<div class="t" style="left:519px;top:289px;">上海星星超市</div>
<div style="left:683px;top:285px;width:91px;height:22px;background:#f7f5fd;border-right:1px solid #dcdcdc;border-bottom:1px solid #dcdcdc"></div>
<div class="t m" style="left:685px;top:289px;">QZKH04</div>
<div style="left:774px;top:285px;width:100px;height:22px;background:#f7f5fd;border-right:1px solid #dcdcdc;border-bottom:1px solid #dcdcdc"></div>
<div class="t" style="left:776px;top:289px;">办公室</div>
<div style="left:874px;top:285px;width:78px;height:22px;background:#f7f5fd;border-right:1px solid #dcdcdc;border-bottom:1px solid #dcdcdc"></div>
<div class="t" style="left:876px;top:289px;">系统管理员</div>
<div style="left:952px;top:285px;width:100px;height:22px;background:#f7f5fd;border-right:1px solid #dcdcdc;border-bottom:1px solid #dcdcdc"></div>
<div class="t" style="left:954px;top:289px;">供应商</div>
<div style="left:1052px;top:285px;width:100px;height:22px;background:#f7f5fd;border-right:1px solid #dcdcdc;border-bottom:1px solid #dcdcdc"></div>
<div class="t" style="left:1052px;top:289px;width:99px;text-align:center;">其他</div>
<div style="left:1152px;top:285px;width:70px;height:22px;background:#f7f5fd;border-right:1px solid #dcdcdc;border-bottom:1px solid #dcdcdc"></div>
<div class="t" style="left:1154px;top:289px;">上海市</div>
<div style="left:1222px;top:285px;width:69px;height:22px;background:#f7f5fd;border-right:1px solid #dcdcdc;border-bottom:1px solid #dcdcdc"></div>
<div class="t" style="left:1224px;top:289px;">徐汇区</div>
<div style="left:230px;top:219px;width:1061px;height:21px;border-top:1px dotted #222;border-bottom:1px dotted #222;border-left:1px dotted #222"></div>
<svg style="left:221px;top:226px;" width="5" height="8" viewBox="0 0 5 8"><path d="M0 0l4.200 3.800L0 7.600z" fill="#000"/></svg>
<div style="left:215px;top:495px;width:1076px;height:16px;background:#f0f0f0;border-top:1px solid #e3e3e3"></div>
<div style="left:232px;top:495px;width:443px;height:15px;border:1px solid #979797;border-radius:3px;background:linear-gradient(#f6f6f6 0,#ececec 45%,#dcdcdc 52%,#d0d0d0 100%);box-shadow:inset 0 0 0 1px rgba(255,255,255,.7)"></div>
<div style="left:449px;top:499px;width:1px;height:8px;background:#5f5f5f"></div>
<div style="left:452px;top:499px;width:1px;height:8px;background:#5f5f5f"></div>
<div style="left:455px;top:499px;width:1px;height:8px;background:#5f5f5f"></div>
<svg style="left:221px;top:499px;" width="5" height="7" viewBox="0 0 5 7"><path d="M4.500 0v7L.5 3.500z" fill="#6e6e6e"/></svg>
<svg style="left:1281px;top:499px;" width="5" height="7" viewBox="0 0 5 7"><path d="M.5 0v7l4-3.500z" fill="#6e6e6e"/></svg>
<div style="left:215px;top:513px;width:1077px;height:25px;background:#fdfddf;border-bottom:1px solid #d9e2ec"></div>
<div class="t" style="left:225px;top:518px;">客户详细资料（销售机会、回访等仅显示最近的<span class="s">10</span>条记录）：</div>
<svg style="left:1266px;top:516px;" width="16" height="16" viewBox="0 0 16 16"><defs><linearGradient id="rx1" x1="0" y1="0" x2="0" y2="1"><stop offset="0" stop-color="#f8765c"/><stop offset="1" stop-color="#e33a26"/></linearGradient></defs><path d="M.800 3.200L3.200.800 8 5.600l4.800-4.800 2.400 2.400L10.400 8l4.800 4.800-2.400 2.400L8 10.400l-4.800 4.800-2.400-2.400L5.600 8z" fill="url(#rx1)" stroke="#d8402c" stroke-width=".5"/><path d="M3.200 1.800l4.800 4.800 4.800-4.800" stroke="#fba492" stroke-width=".8" fill="none"/></svg>
<div style="left:215px;top:538px;width:1077px;height:29px;background:#f0f0f0"></div>
<div style="left:333px;top:540px;width:108px;height:27px;border:1px solid #8b8e9c;border-bottom:none;background:linear-gradient(#f4f4f4 0,#ececec 45%,#dcdcdc 50%,#d4d4d4 100%)"></div>
<div class="t" style="left:332px;top:548px;width:109px;text-align:center;">相关销售机会</div>
<div style="left:442px;top:540px;width:111px;height:27px;border:1px solid #8b8e9c;border-bottom:none;background:linear-gradient(#f4f4f4 0,#ececec 45%,#dcdcdc 50%,#d4d4d4 100%)"></div>
<div class="t" style="left:441px;top:548px;width:112px;text-align:center;">相关回访记录</div>
<div style="left:554px;top:540px;width:109px;height:27px;border:1px solid #8b8e9c;border-bottom:none;background:linear-gradient(#f4f4f4 0,#ececec 45%,#dcdcdc 50%,#d4d4d4 100%)"></div>
<div class="t" style="left:553px;top:548px;width:110px;text-align:center;">相关合同记录</div>
<div style="left:664px;top:540px;width:111px;height:27px;border:1px solid #8b8e9c;border-bottom:none;background:linear-gradient(#f4f4f4 0,#ececec 45%,#dcdcdc 50%,#d4d4d4 100%)"></div>
<div class="t" style="left:663px;top:548px;width:112px;text-align:center;">相关客户服务单</div>
<div style="left:214px;top:566px;width:1077px;height:131px;background:#fff;border:1px solid #8b8e9c"></div>
<div style="left:216px;top:568px;width:1073px;height:127px;background:#fff;border:1px solid #6d6d6d"></div>
<div style="left:218px;top:538px;width:115px;height:30px;background:#fff;border:1px solid #8b8e9c;border-bottom:none"></div>
<div class="t" style="left:218px;top:547px;width:115px;text-align:center;">相关联系人</div>
<div style="left:217px;top:569px;width:15px;height:24px;background:linear-gradient(#ffffff 0,#ffffff 42%,#f4f4f4 52%,#f1f1f1 100%);border-right:1px solid #d5d5d5;border-bottom:1px solid #d5d5d5"></div>
<div style="left:232px;top:569px;width:55px;height:24px;background:linear-gradient(#ffffff 0,#ffffff 42%,#f4f4f4 52%,#f1f1f1 100%);border-right:1px solid #d5d5d5;border-bottom:1px solid #d5d5d5"></div>
<div class="t" style="left:232px;top:575px;width:54px;text-align:center;">序号</div>
<div style="left:287px;top:569px;width:69px;height:24px;background:linear-gradient(#ffffff 0,#ffffff 42%,#f4f4f4 52%,#f1f1f1 100%);border-right:1px solid #d5d5d5;border-bottom:1px solid #d5d5d5"></div>
<div class="t" style="left:287px;top:575px;width:68px;text-align:center;">联系人姓名</div>
<div style="left:356px;top:569px;width:47px;height:24px;background:linear-gradient(#ffffff 0,#ffffff 42%,#f4f4f4 52%,#f1f1f1 100%);border-right:1px solid #d5d5d5;border-bottom:1px solid #d5d5d5"></div>
<div class="t" style="left:356px;top:575px;width:46px;text-align:center;">性别</div>
<div style="left:403px;top:569px;width:63px;height:24px;background:linear-gradient(#ffffff 0,#ffffff 42%,#f4f4f4 52%,#f1f1f1 100%);border-right:1px solid #d5d5d5;border-bottom:1px solid #d5d5d5"></div>
<div class="t" style="left:403px;top:575px;width:62px;text-align:center;">称呼</div>
<div style="left:466px;top:569px;width:94px;height:24px;background:linear-gradient(#ffffff 0,#ffffff 42%,#f4f4f4 52%,#f1f1f1 100%);border-right:1px solid #d5d5d5;border-bottom:1px solid #d5d5d5"></div>
<div class="t" style="left:466px;top:575px;width:93px;text-align:center;">联系人类型</div>
<div style="left:560px;top:569px;width:81px;height:24px;background:linear-gradient(#ffffff 0,#ffffff 42%,#f4f4f4 52%,#f1f1f1 100%);border-right:1px solid #d5d5d5;border-bottom:1px solid #d5d5d5"></div>
<div class="t" style="left:560px;top:575px;width:80px;text-align:center;">所属业务员</div>
<div style="left:641px;top:569px;width:84px;height:24px;background:linear-gradient(#ffffff 0,#ffffff 42%,#f4f4f4 52%,#f1f1f1 100%);border-right:1px solid #d5d5d5;border-bottom:1px solid #d5d5d5"></div>
<div class="t" style="left:641px;top:575px;width:83px;text-align:center;">所属部门</div>
<div style="left:725px;top:569px;width:139px;height:24px;background:linear-gradient(#ffffff 0,#ffffff 42%,#f4f4f4 52%,#f1f1f1 100%);border-right:1px solid #d5d5d5;border-bottom:1px solid #d5d5d5"></div>
<div class="t" style="left:725px;top:575px;width:138px;text-align:center;">关联客户名称</div>
<div style="left:864px;top:569px;width:121px;height:24px;background:linear-gradient(#ffffff 0,#ffffff 42%,#f4f4f4 52%,#f1f1f1 100%);border-right:1px solid #d5d5d5;border-bottom:1px solid #d5d5d5"></div>
<div class="t" style="left:864px;top:575px;width:120px;text-align:center;">单位名称</div>
<div style="left:985px;top:569px;width:77px;height:24px;background:linear-gradient(#ffffff 0,#ffffff 42%,#f4f4f4 52%,#f1f1f1 100%);border-right:1px solid #d5d5d5;border-bottom:1px solid #d5d5d5"></div>
<div class="t" style="left:985px;top:575px;width:76px;text-align:center;">所在部门</div>
<div style="left:1062px;top:569px;width:109px;height:24px;background:linear-gradient(#ffffff 0,#ffffff 42%,#f4f4f4 52%,#f1f1f1 100%);border-right:1px solid #d5d5d5;border-bottom:1px solid #d5d5d5"></div>
<div class="t" style="left:1062px;top:575px;width:108px;text-align:center;">手机</div>
<div style="left:1171px;top:569px;width:109px;height:24px;background:linear-gradient(#ffffff 0,#ffffff 42%,#f4f4f4 52%,#f1f1f1 100%);border-right:1px solid #d5d5d5;border-bottom:1px solid #d5d5d5"></div>
<div class="t" style="left:1171px;top:575px;width:108px;text-align:center;">办公室电话</div>
<div style="left:1280px;top:569px;width:8px;height:24px;background:linear-gradient(#ffffff 0,#ffffff 42%,#f4f4f4 52%,#f1f1f1 100%);border-right:1px solid #d5d5d5;border-bottom:1px solid #d5d5d5"></div>
<div style="left:217px;top:593px;width:15px;height:22px;background:linear-gradient(#fafafa,#ebebeb);border-right:1px solid #d5d5d5;border-bottom:1px solid #d5d5d5"></div>
<div style="left:232px;top:593px;width:55px;height:22px;background:#f0f7fe;border-right:1px solid #dcdcdc;border-bottom:1px solid #dcdcdc"></div>
<div class="t" style="left:232px;top:596px;width:54px;text-align:center;font-family:'Liberation Serif',serif">1</div>
<div style="left:287px;top:593px;width:69px;height:22px;background:#f0f7fe;border-right:1px solid #dcdcdc;border-bottom:1px solid #dcdcdc"></div>
<div class="t" style="left:287px;top:597px;width:68px;text-align:center;">小新</div>
<div style="left:356px;top:593px;width:47px;height:22px;background:#f0f7fe;border-right:1px solid #dcdcdc;border-bottom:1px solid #dcdcdc"></div>
<div class="t" style="left:356px;top:597px;width:46px;text-align:center;">男</div>
<div style="left:403px;top:593px;width:63px;height:22px;background:#f0f7fe;border-right:1px solid #dcdcdc;border-bottom:1px solid #dcdcdc"></div>
<div class="t" style="left:403px;top:597px;width:62px;text-align:center;">小新</div>
<div style="left:466px;top:593px;width:94px;height:22px;background:#f0f7fe;border-right:1px solid #dcdcdc;border-bottom:1px solid #dcdcdc"></div>
<div class="t" style="left:468px;top:597px;">金水区</div>
<div style="left:560px;top:593px;width:81px;height:22px;background:#f0f7fe;border-right:1px solid #dcdcdc;border-bottom:1px solid #dcdcdc"></div>
<div class="t" style="left:560px;top:597px;width:80px;text-align:center;">系统管理员</div>
<div style="left:641px;top:593px;width:84px;height:22px;background:#f0f7fe;border-right:1px solid #dcdcdc;border-bottom:1px solid #dcdcdc"></div>
<div class="t" style="left:641px;top:597px;width:83px;text-align:center;">办公室</div>
<div style="left:725px;top:593px;width:139px;height:22px;background:#f0f7fe;border-right:1px solid #dcdcdc;border-bottom:1px solid #dcdcdc"></div>
<div class="t" style="left:727px;top:597px;">新华书店</div>
<div style="left:864px;top:593px;width:121px;height:22px;background:#f0f7fe;border-right:1px solid #dcdcdc;border-bottom:1px solid #dcdcdc"></div>
<div class="t" style="left:866px;top:597px;">新华书店</div>
<div style="left:985px;top:593px;width:77px;height:22px;background:#f0f7fe;border-right:1px solid #dcdcdc;border-bottom:1px solid #dcdcdc"></div>
<div class="t" style="left:987px;top:597px;">办公室</div>
<div style="left:1062px;top:593px;width:109px;height:22px;background:#f0f7fe;border-right:1px solid #dcdcdc;border-bottom:1px solid #dcdcdc"></div>
<div class="t n" style="left:1064px;top:596px;letter-spacing:-.200px">18688888888</div>
<div style="left:1171px;top:593px;width:109px;height:22px;background:#f0f7fe;border-right:1px solid #dcdcdc;border-bottom:1px solid #dcdcdc"></div>
<div class="t n" style="left:1172px;top:596px;letter-spacing:.250px">0371-66666666</div>
<div style="left:1280px;top:593px;width:8px;height:22px;background:#f0f7fe;border-right:1px solid #dcdcdc;border-bottom:1px solid #dcdcdc"></div>
<svg style="left:223px;top:600px;" width="5" height="8" viewBox="0 0 5 8"><path d="M0 0l4.200 3.800L0 7.600z" fill="#000"/></svg>
<div style="left:217px;top:678px;width:1071px;height:16px;background:#f0f0f0;border-top:1px solid #e3e3e3"></div>
<div style="left:232px;top:678px;width:411px;height:15px;border:1px solid #979797;border-radius:3px;background:linear-gradient(#f6f6f6 0,#ececec 45%,#dcdcdc 52%,#d0d0d0 100%);box-shadow:inset 0 0 0 1px rgba(255,255,255,.7)"></div>
<div style="left:433px;top:682px;width:1px;height:8px;background:#5f5f5f"></div>
<div style="left:436px;top:682px;width:1px;height:8px;background:#5f5f5f"></div>
<div style="left:439px;top:682px;width:1px;height:8px;background:#5f5f5f"></div>
<svg style="left:223px;top:682px;" width="5" height="7" viewBox="0 0 5 7"><path d="M4.500 0v7L.5 3.500z" fill="#6e6e6e"/></svg>
<svg style="left:1278px;top:682px;" width="5" height="7" viewBox="0 0 5 7"><path d="M.5 0v7l4-3.500z" fill="#6e6e6e"/></svg>
<div style="left:6px;top:700px;width:1289px;height:27px;background:linear-gradient(#fdfdfd 0,#fdfdfd 1px,#d7d7d7 1px,#e9e9e9 5px,#f0f0f0 10px,#f0f0f0 100%)"></div>
<svg style="left:10px;top:707px;" width="16" height="16" viewBox="0 0 16 16"><defs><linearGradient id="sl1" x1="0" y1="0" x2="0" y2="1"><stop offset="0" stop-color="#e8382e"/><stop offset="1" stop-color="#cc1512"/></linearGradient></defs><rect x="0" y="0" width="16" height="16" rx="2.2" fill="url(#sl1)"/><g transform="translate(1.300,1.200) scale(.46)"><path d="M2.300 6.700C5 7 7.500 8.200 8.400 10.200c1.500 3.400 2.400 8.800 4.200 14.400-3-.2-5.400-1.200-6.600-3.200C4 18 3.400 12.500 2.300 6.700z" fill="#fff"/><path d="M12.600 24.600c-1.800-3.400-1.700-8 .4-12.400C15 8 18.300 4.600 22 2.600c.9 2.600.4 6.200-1.400 9.400-1.900 3.400-5 7.400-8 12.600z" fill="#fff"/><path d="M26.800 12.400C27.200 18 24.500 23.500 19.500 26 17 27.200 14.500 27.400 12.600 26.600 16.500 25.600 19.500 23.400 21 20.400 19.200 21.400 17.400 22 15.400 22 19 19.600 22.800 16 26.800 12.400z" fill="#fff"/><path d="M2.200 20.400c1.200 3.600 4.200 6.400 8.200 7.400 4.200 1 8.400 0 11.800-2.800-3 3.600-7.400 5.200-11.800 4.400-4.400-.8-7.600-4-8.200-9z" fill="#fff" opacity=".92"/><rect x="24" y="2" width="2" height="2" fill="#fff" opacity=".8"/><rect x="26.500" y="5" width="1.800" height="1.800" fill="#fff" opacity=".7"/></g></svg>
<div class="t" style="left:29px;top:709px;">应用中心：<span class="m">127.0.0.1:7099</span></div>
<svg style="left:214px;top:708px;" width="15" height="15" viewBox="0 0 15 15"><circle cx="7.500" cy="7.500" r="6.700" fill="#3fae3a" stroke="#2f8f2c" stroke-width=".8"/><circle cx="7.500" cy="6" r="5" fill="#6fd064" opacity=".45"/><path d="M3.600 7.700l1.500-1.500 1.900 1.900 3.500-3.700 1.500 1.500-5 5.200z" fill="#fff"/></svg>
<div class="t" style="left:231px;top:709px;">连接状态：正常</div>
<div class="t" style="left:342px;top:709px;">账套：演示账套<span class="p">(</span><span class="s">2017</span>年第<span class="s">1</span>期<span class="p">)</span></div>
<div class="t" style="left:566px;top:709px;">操作员：系统管理员<span class="m">(admin)</span></div>
<div class="t" style="left:749px;top:709px;">正式版<span class="p"> </span>授权序列号：<span class="s">pc006</span></div>
<svg style="left:1104px;top:709px;" width="16" height="11" viewBox="0 0 16 11"><rect x=".5" y=".5" width="15" height="10" fill="#fdfeff" stroke="#7fb2e4" stroke-width="1"/><path d="M.8.800L8 6.400 15.200.8M.8 10.200l5.200-4.600M15.200 10.200L10 5.600" stroke="#7fb2e4" stroke-width=".9" fill="none"/></svg>
<div class="t" style="left:1125px;top:709px;text-decoration:underline">消息提醒中心</div>
<div style="left:205px;top:707px;width:1px;height:18px;background:#c4c4c4"></div>
<div style="left:328px;top:707px;width:1px;height:18px;background:#c4c4c4"></div>
<div style="left:551px;top:707px;width:1px;height:18px;background:#c4c4c4"></div>
<div style="left:735px;top:707px;width:1px;height:18px;background:#c4c4c4"></div>
<div style="left:1094px;top:707px;width:1px;height:18px;background:#c4c4c4"></div>
<div style="left:1272px;top:707px;width:1px;height:18px;background:#c4c4c4"></div>
<div style="left:1292px;top:718px;width:2px;height:2px;background:linear-gradient(135deg,#a6a6a6 50%,#fff 50%)"></div>
<div style="left:1289px;top:721px;width:2px;height:2px;background:linear-gradient(135deg,#a6a6a6 50%,#fff 50%)"></div>
<div style="left:1292px;top:721px;width:2px;height:2px;background:linear-gradient(135deg,#a6a6a6 50%,#fff 50%)"></div>
<div style="left:1286px;top:724px;width:2px;height:2px;background:linear-gradient(135deg,#a6a6a6 50%,#fff 50%)"></div>
<div style="left:1289px;top:724px;width:2px;height:2px;background:linear-gradient(135deg,#a6a6a6 50%,#fff 50%)"></div>
<div style="left:1292px;top:724px;width:2px;height:2px;background:linear-gradient(135deg,#a6a6a6 50%,#fff 50%)"></div>
</body></html>
